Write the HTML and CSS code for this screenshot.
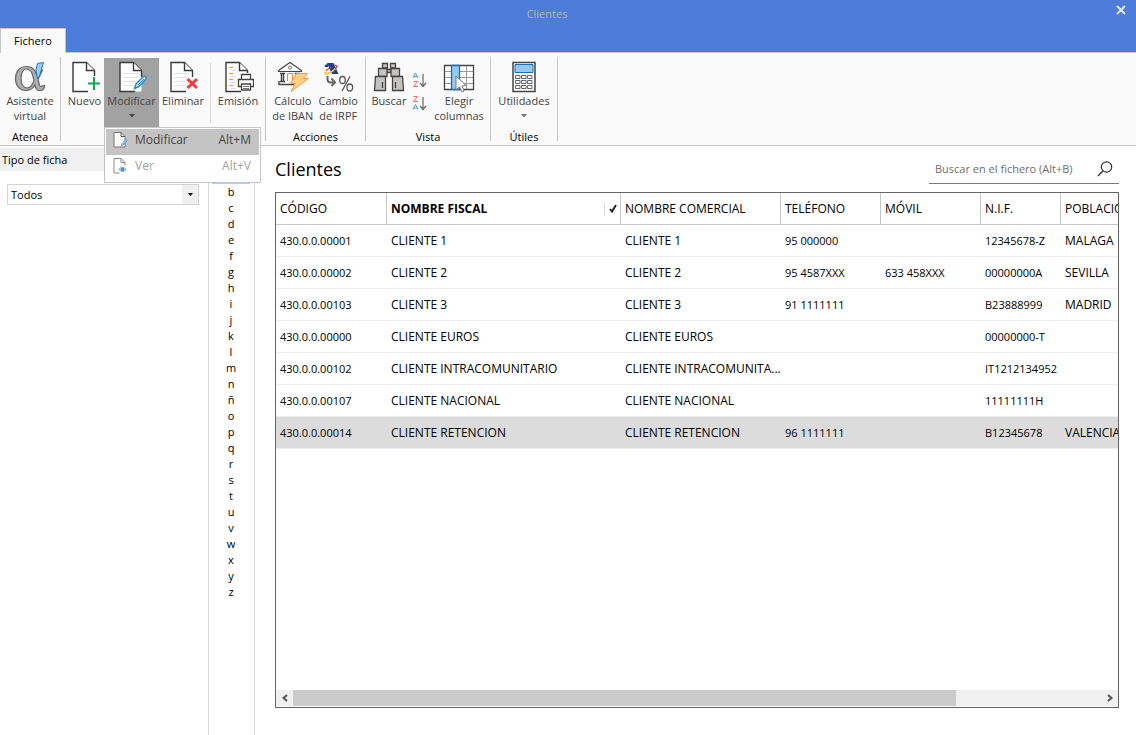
FILE: index.html
```html
<!DOCTYPE html>
<html lang="es">
<head>
<meta charset="utf-8">
<title>Clientes</title>
<link rel="stylesheet" href="styles.css">
</head>
<body>
<svg class="defs" aria-hidden="true">
  <symbol id="page" viewBox="0 0 32 32">
    <path d="M4 1.500H17.500L25.500 9.500V30.500H4Z" fill="#fff"/>
    <path d="M25.500 16V9.500L17.500 1.500H4V30.500H19" fill="none" stroke="#3a3a3a" stroke-width="1.400"/>
    <path d="M17.500 1.500V9.500H25.500" fill="#fff" stroke="#3a3a3a" stroke-width="1.400"/>
  </symbol>
  <symbol id="lines" viewBox="0 0 32 32">
    <path d="M7 12.500H22M7 16.500H22M7 20.500H20M7 24.500H18" stroke="#e2e2e2" fill="none"/>
  </symbol>
  <symbol id="pencil" viewBox="0 0 32 32">
    <path d="M18.500 27.500L20 23L27.500 15.500Q29 14.800 30 16Q30.800 17.200 29.800 18.300L22.500 25.800Z" fill="#cfe8f8" stroke="#2b8fd0" stroke-width="1.500"/>
    <path d="M22 24L28 18" stroke="#2b8fd0"/>
  </symbol>
</svg>
<header class="titlebar">
  <h1 class="window-title">Clientes</h1>
  <button class="close" aria-label="Cerrar"><svg width="10" height="10" viewBox="0 0 10 10"><path d="M1 1L9 9M9 1L1 9" stroke="#e6e6e6" stroke-width="2"/></svg></button>
  <button class="tab">Fichero</button>
</header>

<div class="ribbon">
  <section class="group atenea">
    <div class="tools">
      <button class="tool"><svg class="icon" viewBox="0 0 32 32">
        <path fill-rule="evenodd" d="M12.500 5.500C5.500 5.500 1.500 11 1.500 17.500C1.500 24.500 5.500 29.500 12 29.500C16 29.500 19 27.500 21 24C21.500 28 23.500 29.500 26 29.500C29 29.500 30.500 27.500 30.500 24.500H28.500C28 26 26.500 26.500 25.500 24L24 18.500L28.500 9H25L22.500 13.500C21 8.500 18 5.500 12.500 5.500ZM12.500 8C16 8 18 11 19 15.500L20 19.500C18.500 24 16.500 27 13 27C9 27 7 23 7 17.500C7 12 9 8 12.500 8Z" fill="#b0b0b0" stroke="#686868" stroke-width="1.200"/>
        <path d="M23.500 2.500L29.500 1.500L25.500 15L23.500 18L22 9Z" fill="#9bcdf0" stroke="#2479b5"/>
      </svg><span>Asistente<br>virtual</span></button>
    </div>
    <h2 class="group-name">Atenea</h2>
  </section>
  <span class="sep"></span>
  <section class="group mantenimiento">
    <div class="tools">
      <button class="tool nuevo"><svg class="icon" viewBox="0 0 32 32"><use href="#page"/><path d="M25 15V29M18 22H32" stroke="#fafafa" stroke-width="4"/><path d="M25 16V29M19 22.500H31" stroke="#13a650" stroke-width="2"/></svg><span>Nuevo</span></button>
      <div class="split">
        <button class="tool active" aria-expanded="true"><svg class="icon" viewBox="0 0 32 32"><use href="#page"/><use href="#lines"/><use href="#pencil"/></svg><span>Modificar</span><svg class="caret" width="6" height="4" viewBox="0 0 6 4"><path d="M0 0H6L3 3.500Z" fill="#444"/></svg></button>
        <div class="menu" role="menu">
          <button class="menu-item current" role="menuitem"><svg width="16" height="16" viewBox="0 0 32 32"><path d="M4 1H18L26 9V30H4Z" fill="#fff" stroke="#777" stroke-width="2"/><path d="M18 1V9H26" fill="none" stroke="#555" stroke-width="2"/><use href="#lines"/><use href="#pencil"/></svg><span>Modificar</span><kbd>Alt+M</kbd></button>
          <button class="menu-item" role="menuitem" disabled><svg width="16" height="16" viewBox="0 0 32 32"><path d="M26 15V9L18 1H4V30H15M18 1V9H26" fill="none" stroke="#8b8b8b" stroke-width="2"/><path d="M13 23Q21 14 29 23Q21 31 13 23Z" fill="#d5e7f3" stroke="#8fb5cf" stroke-width="2"/><circle cx="21" cy="23" r="4" fill="#5693bd"/></svg><span>Ver</span><kbd>Alt+V</kbd></button>
        </div>
      </div>
      <button class="tool eliminar"><svg class="icon" viewBox="0 0 32 32"><use href="#page"/><use href="#lines"/><path d="M20 18L30 27M30 18L20 27" stroke="#fafafa" stroke-width="5"/><path d="M20.500 18L30 27M30 18L20.500 27" stroke="#f03c3c" stroke-width="3"/></svg><span>Eliminar</span></button>
      <span class="inner-sep"></span>
      <button class="tool emision"><svg class="icon" viewBox="0 0 32 32"><use href="#page"/><path d="M7 6.500H11M7 12.500H11M7 18.500H11M7 24.500H11" stroke="#f29a35"/><path d="M9 9.500H14M9 15.500H14M9 21.500H14M9 27.500H14" stroke="#ddd"/><path d="M14 12H27L31 17V28H14Z" fill="#fafafa"/><path d="M19.500 18V13.500H28.500V18M19.500 25.500H16.500V18.500H31.500V25.500H28.500M19.500 23H28.500V29H19.500Z" fill="#fff" stroke="#444" stroke-width="1.300"/><path d="M21 25.500H27M21 27.500H27" stroke="#777"/></svg><span>Emisión</span></button>
    </div>
  </section>
  <span class="sep"></span>
  <section class="group acciones">
    <div class="tools">
      <button class="tool"><svg class="icon" viewBox="0 0 32 32">
        <path d="M1.500 9.500L13 1.500L24.500 9.500V10.500H1.500Z" fill="#fff" stroke="#444" stroke-width="1.200"/><circle cx="13" cy="6.500" r="1.500" fill="none" stroke="#777"/>
        <path d="M3 12.500H8M18 12.500H23M3 20.500H8M4.500 12V20M6.500 12V20M19.500 12V20M21.500 12V20M1.500 23.500H17M2 20V23.500" fill="none" stroke="#444" stroke-width="1.400"/><path d="M10.500 20V12.500H15.500V20" fill="#fff" stroke="#f08a3a"/>
        <path d="M19.500 12.500H30.500L26.500 17.500H31.500L14 30.500L18.500 22.500H13.500Z" fill="#fbd28a" stroke="#ee9b42"/>
      </svg><span>Cálculo<br>de IBAN</span></button>
      <button class="tool"><svg class="icon" viewBox="0 0 32 32">
        <path d="M5 2H11.500L16.500 13H10Z" fill="#17419b"/><path d="M2.500 4.500L6 2.500V6H3Z" fill="#17419b"/>
        <path d="M3 10.500C2 14.500 9 12.500 14 7" fill="none" stroke="#f4c62a" stroke-width="1.800"/><path d="M4 9.500L9 6.500M12.500 4L15 5L13.500 8" fill="none" stroke="#df3044" stroke-width="1.300"/>
        <path d="M5.500 15V18Q5.500 21.500 9 21.500H13M9.500 17.500L13 21.500L9.500 25" fill="none" stroke="#666" stroke-width="2"/>
        <path d="M20 30L28 15.500" stroke="#555" stroke-width="1.300"/><ellipse cx="20.500" cy="19" rx="2.800" ry="3.500" fill="none" stroke="#555" stroke-width="1.300"/><ellipse cx="27.800" cy="26.500" rx="2.800" ry="3.500" fill="none" stroke="#555" stroke-width="1.300"/>
      </svg><span>Cambio<br>de IRPF</span></button>
    </div>
    <h2 class="group-name">Acciones</h2>
  </section>
  <span class="sep"></span>
  <section class="group vista">
    <div class="tools">
      <button class="tool buscar"><svg class="icon" viewBox="0 0 32 32"><g fill="#c5c3c1" stroke="#444" stroke-width="1.300"><path d="M9.500 2.500H14.500V7H9.500ZM17.500 2.500H22.500V7H17.500Z"/><path d="M14 8.500H18V11.500H14Z"/><path d="M5.500 7.500H14V15.500H5.500ZM18 7.500H26.500V15.500H18Z"/><path d="M2.500 15.500H12.500V29.500H1.500ZM19.500 15.500H29.500L30.500 29.500H19.500Z"/><path d="M9.500 21V27M22.500 21V27"/></g></svg><span>Buscar</span></button>
      <div class="sorts">
        <button class="sort" aria-label="Orden ascendente"><svg width="16" height="16" viewBox="0 0 16 16"><path d="M1 6L3.500 1L6 6M2 4.500H5" fill="none" stroke="#4ba2d8"/><path d="M1.500 9.500H5.500L1.500 14.500H6" fill="none" stroke="#ee6a6a"/><path d="M11 2V14M8 11L11 14.500L14 11" fill="none" stroke="#666" stroke-width="1.200"/></svg></button>
        <button class="sort" aria-label="Orden descendente"><svg width="16" height="16" viewBox="0 0 16 16"><path d="M1.500 1.500H5.500L1.500 6.500H6" fill="none" stroke="#ee6a6a"/><path d="M1 14.500L3.500 9.500L6 14.500M2 13H5" fill="none" stroke="#4ba2d8"/><path d="M11 2V14M8 11L11 14.500L14 11" fill="none" stroke="#666" stroke-width="1.200"/></svg></button>
      </div>
      <button class="tool"><svg class="icon" viewBox="0 0 32 32"><path d="M1.500 4.500H30.500V28.500H1.500Z" fill="#fff" stroke="#444" stroke-width="1.300"/><path d="M2 10.500H30M2 16.500H30M2 22.500H30M23.500 5V28" stroke="#999"/><path d="M8.500 4.500H16.500V28.500H8.500Z" fill="#94caef" stroke="#1f6fae" stroke-width="1.300"/><path d="M13 15V29L16.500 26L19 31L21 30L19 25L23 24.500Z" fill="#fff" stroke="#777"/></svg><span>Elegir<br>columnas</span></button>
    </div>
    <h2 class="group-name">Vista</h2>
  </section>
  <span class="sep"></span>
  <section class="group utiles">
    <div class="tools">
      <button class="tool"><svg class="icon" viewBox="0 0 32 32"><path d="M5 1.500H27V30.500H5Z" fill="#fff" stroke="#444" stroke-width="1.500"/><path d="M7 3.500H25V11.500H7Z" fill="#94caef" stroke="#1f6fae"/><g fill="#fff" stroke="#666"><path d="M7.500 14.500H12V17.500H7.500ZM13.500 14.500H18V17.500H13.500ZM19.500 14.500H24V17.500H19.500ZM7.500 19.500H12V22.500H7.500ZM13.500 19.500H18V22.500H13.500ZM19.500 19.500H24V22.500H19.500ZM7.500 24.500H12V27.500H7.500ZM13.500 24.500H18V27.500H13.500ZM19.500 24.500H24V27.500H19.500Z"/></g></svg><span>Utilidades</span><svg class="caret" width="6" height="4" viewBox="0 0 6 4"><path d="M0 0H6L3 3.500Z" fill="#777"/></svg></button>
    </div>
    <h2 class="group-name">Útiles</h2>
  </section>
  <span class="sep"></span>
</div>

<div class="workspace">
  <aside class="filters">
    <label class="filter-title" for="tipo">Tipo de ficha</label>
    <div class="select-box">
      <select id="tipo"><option>Todos</option></select>
      <span class="select-arrow"><svg width="5" height="3" viewBox="0 0 5 3"><path d="M0 0H5L2.500 3Z" fill="#000"/></svg></span>
    </div>
  </aside>
  <nav class="letters" aria-label="Índice">
    <button class="selected" aria-label="a"></button><button>b</button><button>c</button><button>d</button><button>e</button><button>f</button><button>g</button><button>h</button><button>i</button><button>j</button><button>k</button><button>l</button><button>m</button><button>n</button><button>ñ</button><button>o</button><button>p</button><button>q</button><button>r</button><button>s</button><button>t</button><button>u</button><button>v</button><button>w</button><button>x</button><button>y</button><button>z</button>
  </nav>
  <main class="content">
    <div class="content-head">
      <h2 class="content-title">Clientes</h2>
      <div class="search">
        <input type="search" aria-label="Buscar en el fichero" placeholder="Buscar en el fichero (Alt+B)">
        <svg width="16" height="16" viewBox="0 0 16 16"><circle cx="9.500" cy="6" r="5.200" fill="none" stroke="#333" stroke-width="1.200"/><path d="M5.800 10L1 15" stroke="#333" stroke-width="1.300"/></svg>
      </div>
    </div>
    <div class="grid">
      <div class="grid-view">
        <table>
          <colgroup><col class="c-code"><col class="c-fiscal"><col class="c-trade"><col class="c-phone"><col class="c-phone"><col class="c-nif"><col class="c-city"></colgroup>
          <thead><tr><th>CÓDIGO</th><th class="sorted"><div class="sorted-head">NOMBRE FISCAL<span class="check"><svg width="8" height="9" viewBox="0 0 8 9"><path d="M1 5L3 7.500L7 1" fill="none" stroke="#222" stroke-width="2"/></svg></span></div></th><th>NOMBRE COMERCIAL</th><th>TELÉFONO</th><th>MÓVIL</th><th>N.I.F.</th><th>POBLACIÓN</th></tr></thead>
          <tbody>
            <tr><td class="num">430.0.0.00001</td><td>CLIENTE 1</td><td>CLIENTE 1</td><td class="num">95 000000</td><td class="num"></td><td class="num">12345678-Z</td><td>MALAGA</td></tr>
            <tr><td class="num">430.0.0.00002</td><td>CLIENTE 2</td><td>CLIENTE 2</td><td class="num">95 4587XXX</td><td class="num">633 458XXX</td><td class="num">00000000A</td><td>SEVILLA</td></tr>
            <tr><td class="num">430.0.0.00103</td><td>CLIENTE 3</td><td>CLIENTE 3</td><td class="num">91 1111111</td><td class="num"></td><td class="num">B23888999</td><td>MADRID</td></tr>
            <tr><td class="num">430.0.0.00000</td><td>CLIENTE EUROS</td><td>CLIENTE EUROS</td><td class="num"></td><td class="num"></td><td class="num">00000000-T</td><td></td></tr>
            <tr><td class="num">430.0.0.00102</td><td>CLIENTE INTRACOMUNITARIO</td><td>CLIENTE INTRACOMUNITA...</td><td class="num"></td><td class="num"></td><td class="num">IT1212134952</td><td></td></tr>
            <tr><td class="num">430.0.0.00107</td><td>CLIENTE NACIONAL</td><td>CLIENTE NACIONAL</td><td class="num"></td><td class="num"></td><td class="num">11111111H</td><td></td></tr>
            <tr class="picked"><td class="num">430.0.0.00014</td><td>CLIENTE RETENCION</td><td>CLIENTE RETENCION</td><td class="num">96 1111111</td><td class="num"></td><td class="num">B12345678</td><td>VALENCIA</td></tr>
          </tbody>
        </table>
      </div>
      <div class="scrollbar">
        <button aria-label="Izquierda"><svg width="8" height="8" viewBox="0 0 8 8"><path d="M6 1L2.500 4L6 7" fill="none" stroke="#555" stroke-width="2"/></svg></button>
        <div class="track"><div class="thumb"></div></div>
        <button aria-label="Derecha"><svg width="8" height="8" viewBox="0 0 8 8"><path d="M2 1L5.500 4L2 7" fill="none" stroke="#555" stroke-width="2"/></svg></button>
      </div>
    </div>
  </main>
</div>
</body>
</html>
```
FILE: styles.css
```css
* { box-sizing: border-box; }
body {
  margin: 0;
  min-height: 100vh;
  display: flex;
  flex-direction: column;
  background: #fff;
  color: #000;
  font: 11px/16px "Open Sans", "Noto Sans", sans-serif;
}
button, input, select { font: inherit; color: inherit; border: 0; padding: 0; background: none; margin: 0; border-radius: 0; }
h1, h2 { margin: 0; font-weight: normal; font-size: inherit; }
svg { display: block; flex: none; }
.defs { position: absolute; width: 0; height: 0; }

.titlebar {
  display: grid;
  grid-template-columns: 40px 1fr 40px;
  grid-template-rows: 28px 25px;
  height: 53px;
  background: #4d7cdb;
  border-bottom: 1px solid #c6c6c6;
}
.window-title { grid-column: 2; text-align: center; line-height: 28px; color: #b4b4b4; padding-right: 42px; }
.close { grid-column: 3; justify-self: end; align-self: start; padding: 5px 10px; }
.tab {
  grid-column: 1 / 3;
  justify-self: start;
  width: 66px;
  background: #fafafa;
  border: 1px solid #c6c6c6;
  border-bottom: 0;
}

.ribbon { display: flex; background: #fafafa; border-bottom: 1px solid #c6c6c6; }
.sep { width: 1px; margin: 4px 0; background: #c6c6c6; }
.group { padding-top: 5px; display: flex; flex-direction: column; }
.tools { display: flex; height: 69px; flex: none; }
.group-name { text-align: center; padding-top: 2px; }
.tool {
  flex: 1;
  display: flex;
  flex-direction: column;
  align-items: center;
  padding-top: 3px;
  line-height: 15px;
  white-space: nowrap;
  color: #444;
}
.icon { width: 32px; height: 32px; }
.caret { margin-top: 6px; }
.atenea { width: 60px; }
.mantenimiento { width: 204px; }
.acciones { width: 99px; padding-left: 4px; padding-right: 4px; }
.vista { width: 124px; }
.utiles { width: 66px; }
.nuevo { flex: 0 0 43px; padding-left: 4px; }
.split { position: relative; width: 55px; display: flex; }
.active { background: #a2a2a2; }
.eliminar { flex: 0 0 48px; }
.inner-sep { width: 1px; height: 60px; margin: 5px 0 0 3px; background: #dcdcdc; }
.buscar { flex: 0 0 46px; }
.sorts { display: flex; flex-direction: column; gap: 7px; padding-top: 14px; width: 16px; }

.menu {
  position: absolute;
  z-index: 2;
  top: 69px;
  left: 0;
  width: 157px;
  padding: 1px;
  background: #fff;
  border: 1px solid #c6c6c6;
}
.menu-item {
  display: flex;
  align-items: center;
  width: 100%;
  height: 26px;
  padding: 0 8px 4px 6px;
  gap: 7px;
  font-size: 12px;
  color: #444;
}
.menu-item kbd { margin-left: auto; font: inherit; }
.menu-item.current { background: #c4c4c4; }
.menu-item:disabled { color: #a2a2a2; }

.workspace { flex: 1; display: flex; min-width: 0; }
.filters { width: 208px; padding-top: 2px; }
.filter-title { display: block; line-height: 23px; padding-left: 2px; background: #f0f0f0; }
.select-box { position: relative; display: flex; margin: 13px 9px 0 7px; border: 1px solid #d4d4d4; }
.select-box select { appearance: none; flex: 1; height: 19px; padding-left: 3px; }
.select-arrow {
  position: absolute;
  inset: 0 0 0 auto;
  width: 16px;
  display: grid;
  place-items: center;
  background: #f0f0f0;
  pointer-events: none;
}
.letters {
  width: 47px;
  padding: 22px 4px 0 3px;
  display: flex;
  flex-direction: column;
  border: solid #d8d8d8;
  border-width: 0 1px;
}
.letters button { height: 16px; line-height: 16px; }
.letters .selected { background: #b9c9ee; }

.content { flex: 1; min-width: 0; display: flex; flex-direction: column; padding: 0 17px 27px 20px; }
.content-head { display: flex; justify-content: space-between; align-items: flex-start; height: 46px; }
.content-title { font-size: 18px; line-height: 46px; }
.search {
  display: flex;
  align-items: center;
  width: 190px;
  height: 30px;
  margin-top: 8px;
  padding: 0 6px;
  border-bottom: 1px solid #7a7a7a;
}
.search input { flex: 1; min-width: 0; outline: 0; }
.search input::placeholder { color: #6e6e6e; opacity: 1; }

.grid { flex: 1; display: flex; flex-direction: column; border: 1px solid #646464; min-width: 0; }
.grid-view { flex: 1; overflow: hidden; }
table { border-collapse: separate; border-spacing: 0; table-layout: fixed; width: 1060px; font-size: 12px; }
.c-code { width: 111px; }
.c-fiscal { width: 234px; }
.c-trade { width: 160px; }
.c-phone { width: 100px; }
.c-nif { width: 80px; }
th, td { height: 32px; padding: 0 4px; text-align: left; font-weight: normal; white-space: nowrap; border-bottom: 1px solid #ececec; }
th { border-right: 1px solid #c6c6c6; border-bottom-color: #c6c6c6; }
.num { font-size: 11px; }
.sorted { font-weight: bold; padding-right: 0; }
.sorted-head { display: flex; justify-content: space-between; align-items: center; }
.check { display: grid; place-items: center; width: 16px; height: 14px; border-left: 1px solid #dcdcdc; }
.picked td { background: #dcdcdc; }

.scrollbar { display: flex; height: 16px; margin-bottom: 1px; background: #f0f0f0; }
.scrollbar button { width: 17px; display: grid; place-items: center; }
.track { flex: 1; display: flex; }
.thumb { width: 82%; background: #cbcbcb; }
```
